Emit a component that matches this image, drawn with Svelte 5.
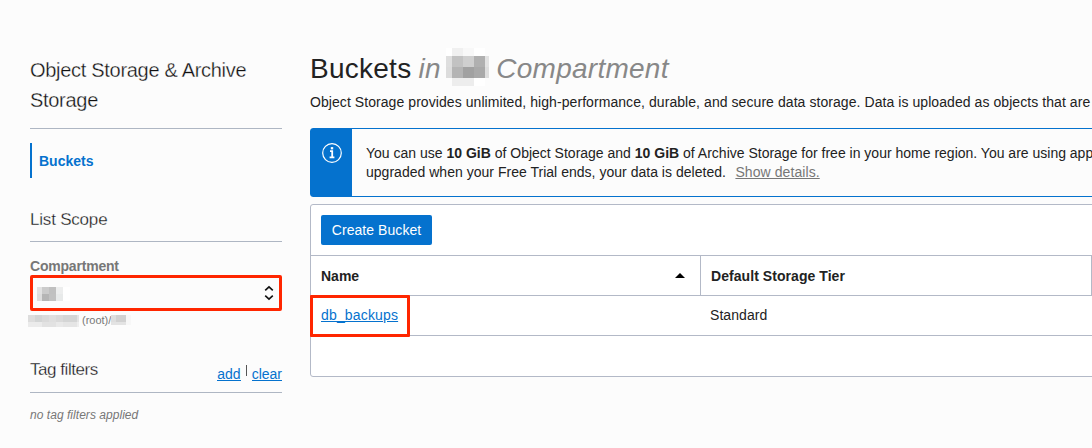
<script>
  const titleMask = [
    [6, 0, 11, 8, '#f0f0f0'], [17, 0, 11, 8, '#f8f8f8'], [28, 0, 11, 8, '#ffffff'], [0, 0, 6, 8, '#ffffff'],
    [0, 8, 6, 11, '#dedede'], [6, 8, 11, 11, '#c2c2c2'], [17, 8, 11, 11, '#cfcfcf'], [28, 8, 11, 11, '#b0b0b0'], [39, 8, 4, 11, '#e3e3e3'],
    [0, 19, 6, 11, '#dcdcdc'], [6, 19, 11, 11, '#b4b4b4'], [17, 19, 11, 11, '#a1a1a1'], [28, 19, 11, 11, '#a9a9a9'], [39, 19, 4, 11, '#dedede'],
    [0, 30, 6, 8, '#fcfcfc'], [6, 30, 22, 8, '#ededed'], [28, 30, 11, 8, '#ffffff']
  ];
  const selectMask = [
    [0, 0, 5, 7, '#e2e2e2'], [5, 0, 7, 7, '#cbcbcb'], [12, 0, 7, 7, '#c0c0c0'], [19, 0, 7, 7, '#edeeee'], [26, 0, 7, 14, '#ffffff'],
    [0, 7, 5, 7, '#dedede'], [5, 7, 7, 7, '#b5b5b5'], [12, 7, 7, 7, '#c1c1c1'], [19, 7, 7, 7, '#e8eaea']
  ];
  const rootMask = [
    [0, 0, 7, 7, '#dddddd'], [7, 0, 7, 7, '#d3d5d5'], [14, 0, 7, 7, '#dadada'], [21, 0, 7, 7, '#dfdfdf'], [28, 0, 7, 7, '#dadada'], [35, 0, 14, 7, '#d4d5d5'], [49, 0, 2, 7, '#e4e4e4'],
    [0, 7, 14, 5, '#ebebeb'], [14, 7, 14, 5, '#e2e2e2'], [28, 7, 7, 5, '#e9e9e9'], [35, 7, 14, 5, '#e5e5e5'], [49, 7, 2, 5, '#eeeeee']
  ];
  const childMask = [
    [0, 0, 5, 7, '#dedede'], [5, 0, 10, 7, '#d1d1d1'], [15, 0, 5, 10, '#f7f7f7'], [0, 7, 15, 3, '#e3e3e3']
  ];
</script>

{#snippet mask(cells, w, h)}
  <svg class="mask" width={w} height={h} shape-rendering="crispEdges" aria-hidden="true">
    {#each cells as [x, y, cw, ch, fill]}
      <rect {x} {y} width={cw} height={ch} {fill} />
    {/each}
  </svg>
{/snippet}

<div class="page">
  <aside>
    <h2 class="service">Object Storage &amp; Archive<br />Storage</h2>
    <nav><a class="active" href="#buckets">Buckets</a></nav>
    <h3 class="scope">List Scope</h3>
    <div class="label">Compartment</div>
    <div class="select">
      {@render mask(selectMask, 33, 14)}
      <svg class="chevrons" width="10" height="16" viewBox="0 0 10 16" fill="none" stroke="#111" stroke-width="1.6">
        <path d="M1.2 5.4 5 1.8 8.8 5.4M1.2 10.6 5 14.2 8.8 10.6" />
      </svg>
    </div>
    <div class="path">{@render mask(rootMask, 51, 12)}<span>(root)/</span>{@render mask(childMask, 20, 10)}</div>
    <div class="tags">
      <h3>Tag filters</h3>
      <div class="actions"><a href="#add">add</a><i></i><a href="#clear">clear</a></div>
    </div>
    <p class="none">no tag filters applied</p>
  </aside>

  <main>
    <h1><span class="bk">Buckets</span><em class="in">in</em>{@render mask(titleMask, 43, 38)}<em class="comp">Compartment</em></h1>
    <p class="intro">Object Storage provides unlimited, high-performance, durable, and secure data storage. Data is uploaded as objects that are</p>
    <section class="banner">
      <div class="info">
        <svg width="20" height="20" viewBox="0 0 20 20" fill="none" stroke="#fff">
          <circle cx="10" cy="10" r="9.3" stroke-width="1.2" />
          <path d="M8 8.2h2.2v6M7.6 14.3h4.8" stroke-width="1.8" />
          <rect x="8.8" y="4.1" width="2.4" height="2.3" fill="#fff" stroke="none" />
        </svg>
      </div>
      <div class="message">
        <p class="m1">You can use <b>10 GiB</b> of Object Storage and <b>10 GiB</b> of Archive Storage for free in your home region. You are using app</p>
        <p class="m2">upgraded when your Free Trial ends, your data is deleted.<a href="#details">Show details.</a></p>
      </div>
    </section>
    <section class="card">
      <div class="toolbar"><button>Create Bucket</button></div>
      <div class="row head">
        <div class="cell name"><span>Name</span><svg width="10" height="5"><path d="M0 5 5 0l5 5z" fill="#000" /></svg></div>
        <div class="cell tier"><span>Default Storage Tier</span></div>
      </div>
      <div class="row">
        <div class="cell"><div class="marked"><a href="#db">db_backups</a></div></div>
        <div class="cell std"><span>Standard</span></div>
      </div>
    </section>
  </main>
</div>

<style>
  :global(body) { background: #fcfcfc; overflow: hidden; }
  .page {
    width: 1092px; height: 448px; overflow: hidden; box-sizing: border-box;
    display: grid; grid-template-columns: 252px 782px; column-gap: 28px; padding-left: 30px;
    font: 14px/20px "Liberation Sans", Arial, sans-serif; color: #222; background: #fcfcfc;
  }
  h1, h2, h3, p { margin: 0; font-weight: 400; white-space: nowrap; }
  a { color: #0572ce; }
  .mask { display: block; flex: none; }
  .service { margin-top: 55px; height: 73px; font-size: 20px; line-height: 30px; letter-spacing: -0.3px; border-bottom: 1px solid #aeb6c3; }
  .service, h3 { color: #111; -webkit-text-stroke: 0.3px #fcfcfc; }
  nav { margin-top: 14px; height: 35px; border-left: 2px solid #0572ce; padding-left: 7px; display: flex; align-items: center; }
  nav a { font-weight: 700; text-decoration: none; }
  h3 { font-size: 17px; line-height: 22px; letter-spacing: -0.2px; }
  .scope { margin-top: 31px; height: 32px; border-bottom: 1px solid #aeb6c3; }
  .label { margin-top: 15px; height: 18px; font-weight: 700; color: #777; line-height: 18px; letter-spacing: -0.2px; }
  .select {
    height: 36px; box-sizing: border-box; border: 3px solid #ff2600; border-radius: 2px;
    padding: 1px 5px 0 4px; display: flex; align-items: center; justify-content: space-between;
  }
  .chevrons { margin-top: -1px; }
  .path { margin: 4px 0 0 -2px; height: 12px; display: flex; font-size: 11px; line-height: 11px; color: #777; }
  .path span { margin-left: 3px; }
  .tags { margin-top: 32px; height: 33px; display: flex; justify-content: space-between; border-bottom: 1px solid #aeb6c3; }
  .tags h3 { letter-spacing: -0.45px; }
  .actions { display: flex; padding-top: 5px; }
  .actions a { text-decoration: none; border-bottom: 1px solid #0572ce; height: 16px; line-height: 20px; }
  .actions i { width: 1px; height: 11px; background: #555; margin: 1px 5px 0; }
  .none { margin-top: 14px; line-height: 16px; font-size: 12px; letter-spacing: 0.04px; font-style: italic; color: #777; }
  h1 { height: 38px; margin-top: 48px; display: flex; font-size: 28px; line-height: 42px; letter-spacing: 0.26px; }
  h1 em { color: #888; }
  .in { margin: 0 5px 0 7px; }
  .comp { margin-left: 7.5px; }
  .intro { margin-top: 6px; letter-spacing: 0.067px; }
  .banner {
    margin-top: 16px; width: 800px; height: 69px; box-sizing: border-box; display: flex;
    border: 1px solid #0572ce; border-radius: 3px;
  }
  .info { width: 41px; background: #0572ce; flex: none; display: flex; justify-content: center; padding-top: 14px; box-sizing: border-box; }
  .message { padding: 15px 0 0 14px; line-height: 19px; }
  .m2 { letter-spacing: 0.02px; }
  .message a { color: #777; margin-left: 9.5px; letter-spacing: 0.08px; }
  .card { margin-top: 7px; width: 800px; height: 173px; box-sizing: border-box; background: #fff; border: 1px solid #b3b9c7; border-radius: 3px; }
  .toolbar { height: 50px; box-sizing: border-box; padding: 10px; }
  button { width: 111px; height: 30px; padding: 0; border: 0; border-radius: 2px; background: #0572ce; color: #fff; font: inherit; letter-spacing: 0.06px; white-space: nowrap; }
  .row { display: grid; grid-template-columns: 390px 390px 1fr; height: 40px; box-sizing: border-box; border-bottom: 1px solid #b3b9c7; }
  .head { height: 41px; border-top: 1px solid #b3b9c7; font-weight: 700; }
  .cell { display: flex; align-items: center; box-sizing: border-box; }
  .head .cell { border-right: 1px solid #b3b9c7; }
  .head .tier { width: 391px; letter-spacing: 0.06px; }
  .name { padding: 0 15px 0 10px; justify-content: space-between; }
  .tier { padding-left: 10px; }
  .std { padding: 0 0 3px 9px; letter-spacing: 0.07px; }
  .marked {
    box-sizing: border-box; width: 100px; height: 42px; margin: -1px 0 -1px -1px; padding: 0 0 2px 8px;
    border: 3px solid #ff2600; border-radius: 1px; display: flex; align-items: center; flex: none; letter-spacing: 0.16px;
  }
</style>
